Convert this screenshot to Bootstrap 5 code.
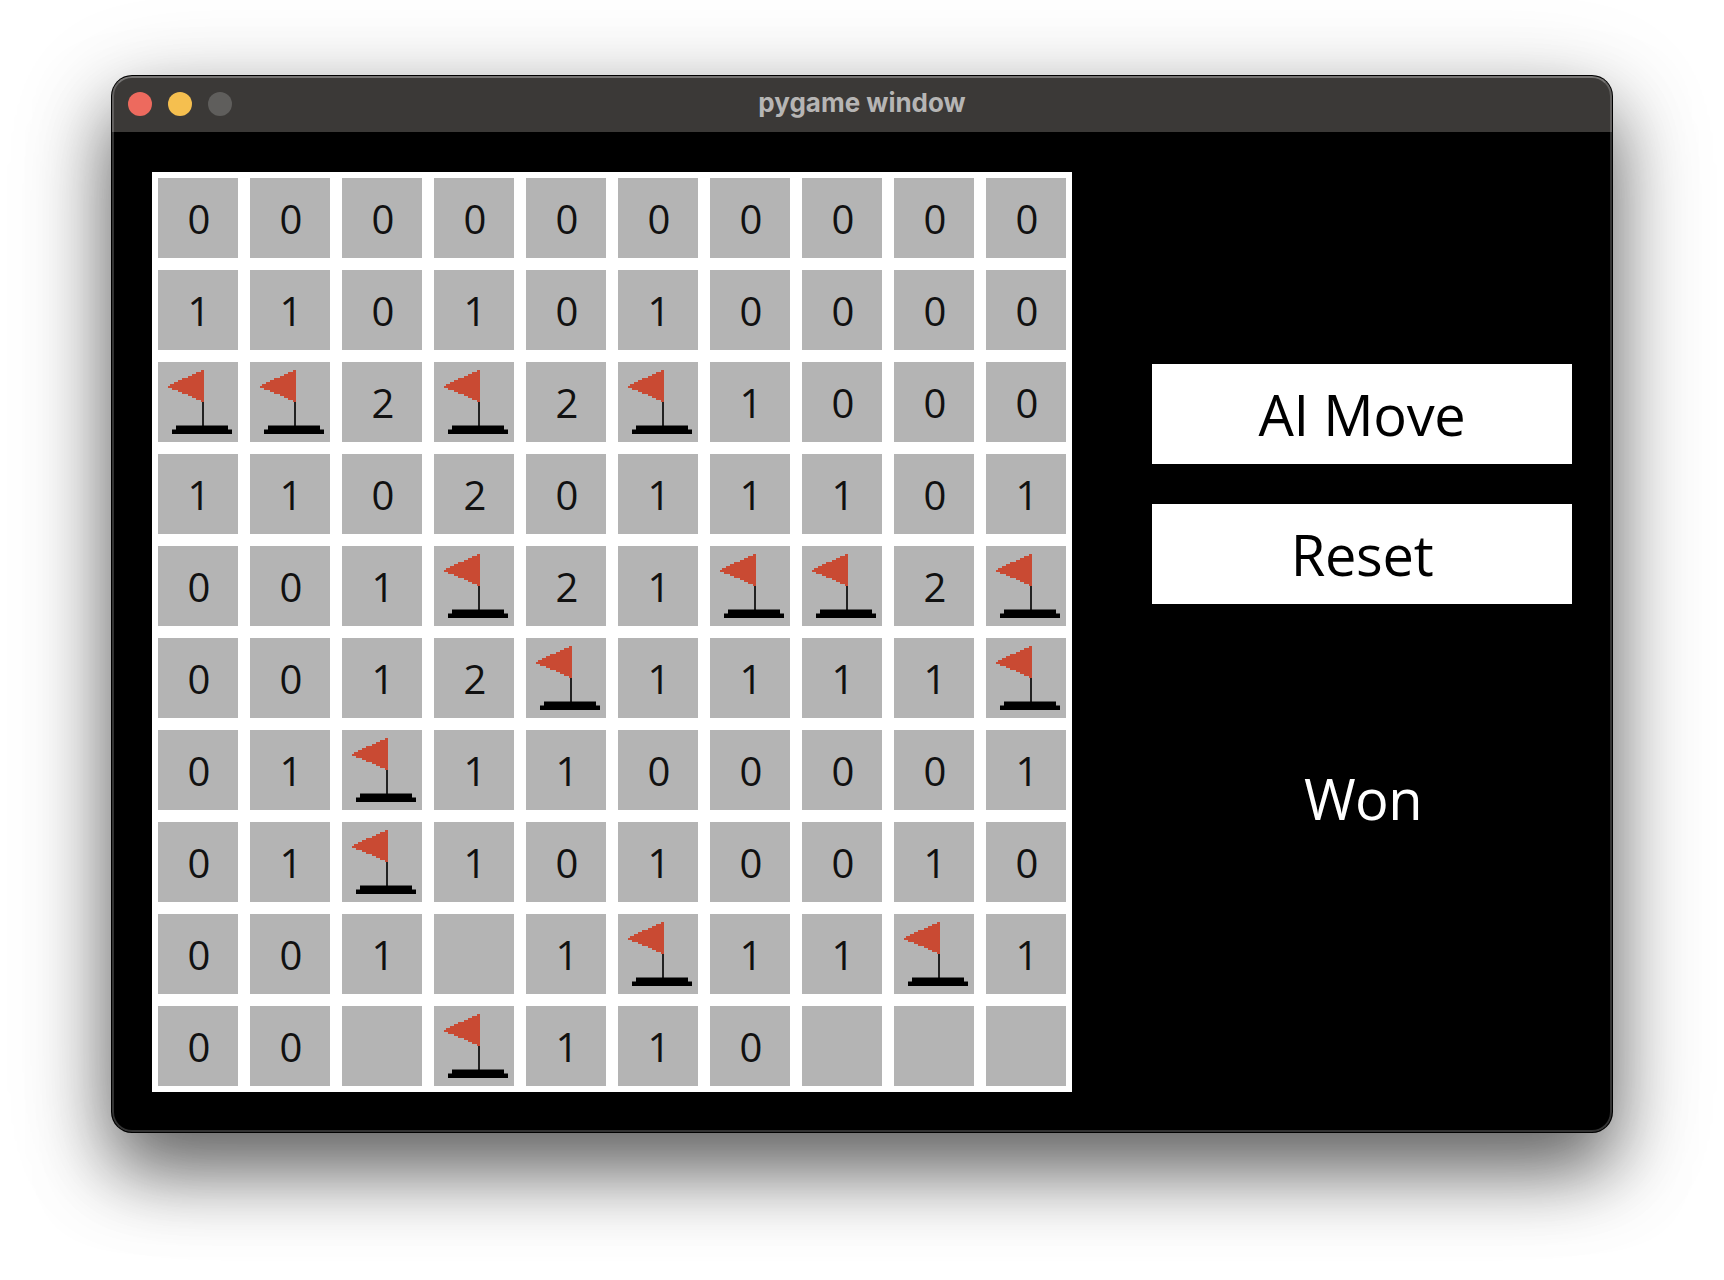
<!DOCTYPE html>
<html lang="en">
<head>
<meta charset="utf-8">
<title>pygame window</title>
<link href="https://cdn.jsdelivr.net/npm/bootstrap@5.3.0/dist/css/bootstrap.min.css" rel="stylesheet">
<style>
body { background: #fff; height: 1280px; overflow: hidden; font-family: "Open Sans", sans-serif; padding: 76px 112px 0; }
.app-window { position: relative; width: 1500px; height: 1056px; border-radius: 20px; background: #000; box-shadow: 0 0 0 1px #000, 0 38px 72px rgba(0,0,0,.53), 0 24px 104px rgba(0,0,0,.22); overflow: hidden; }
.window-edge { position: absolute; inset: 0; border-radius: 20px; border: 2px solid rgba(255,255,255,.2); border-top-color: rgba(255,255,255,.3); pointer-events: none; }
.title-bar { height: 56px; background: #3b3937; padding: 0 16px; }
.lights { gap: 16px; width: 104px; }
.light { width: 24px; height: 24px; border-radius: 50%; }
.light-close { background: #ed6a5e; }
.light-min { background: #f5bf4f; }
.light-off { background: #5f5e5c; }
.title-text { font: 700 26px/32px Inter, sans-serif; color: #b6b5b4; margin-top: -3px; }
.game { height: 1000px; padding: 40px; gap: 80px; }
.board { display: grid; grid-template-columns: repeat(10, 80px); grid-auto-rows: 80px; gap: 12px; padding: 6px; background: #fff; width: 920px; height: 920px; }
.cell { background: #b4b4b4; color: #111; font-size: 40px; line-height: 82px; height: 80px; text-align: center; padding-left: 2px; }
.cell.flagged { padding: 0; line-height: 0; }
.panel { width: 420px; padding-top: 192px; }
.game-btn { height: 100px; font-size: 56px; line-height: 100px; letter-spacing: -.3px; padding: 0; background: #fff; color: #000; border: 0; border-radius: 0; }
.status { font-size: 56px; line-height: 76px; letter-spacing: -.5px; padding-left: 2px; margin-top: 156px; color: #fff; }
</style>
<script src="https://cdn.jsdelivr.net/npm/bootstrap@5.3.0/dist/js/bootstrap.bundle.min.js"></script>
</head>
<body>
<svg width="0" height="0" class="position-absolute">
  <symbol id="flag" viewBox="0 0 80 80">
    <path d="M46 8H43V10H38V12H34V14H30V16H24V18H20V20H16V22H12V24H10V26H14V28H20V30H24V32H30V34H34V36H38V38H43V40H46z" fill="#c94a33"/>
    <path d="M44 40h2v24h-2z" fill="#222"/>
    <path d="M18 63.5h52v4h4v4.500H14v-4.500h4z" fill="#000"/>
  </symbol>
</svg>
<main class="app-window">
  <header class="title-bar d-flex align-items-center justify-content-between">
    <div class="lights d-flex">
      <span class="light light-close"></span><span class="light light-min"></span><span class="light light-off"></span>
    </div>
    <div class="title-text">pygame window</div>
    <div class="lights"></div>
  </header>
  <section class="game d-flex">
    <div class="board" id="board"></div>
    <div class="panel d-flex flex-column">
      <div class="d-grid" style="gap:40px">
        <button class="btn game-btn">AI Move</button>
        <button class="btn game-btn">Reset</button>
      </div>
      <div class="status text-center">Won</div>
    </div>
  </section>
  <div class="window-edge"></div>
</main>
<script>
const rows = ["0000000000","1101010000","FF2F2F1000","1102011101","001F21FF2F","0012F1111F","01F1100001","01F1010010","001 1F11F1","00 F110   "];
document.getElementById("board").innerHTML = rows.join("").split("").map(c =>
  c === "F" ? '<div class="cell flagged"><svg width="80" height="80"><use href="#flag"/></svg></div>'
            : '<div class="cell">' + c.trim() + '</div>').join("");
</script>
</body>
</html>
